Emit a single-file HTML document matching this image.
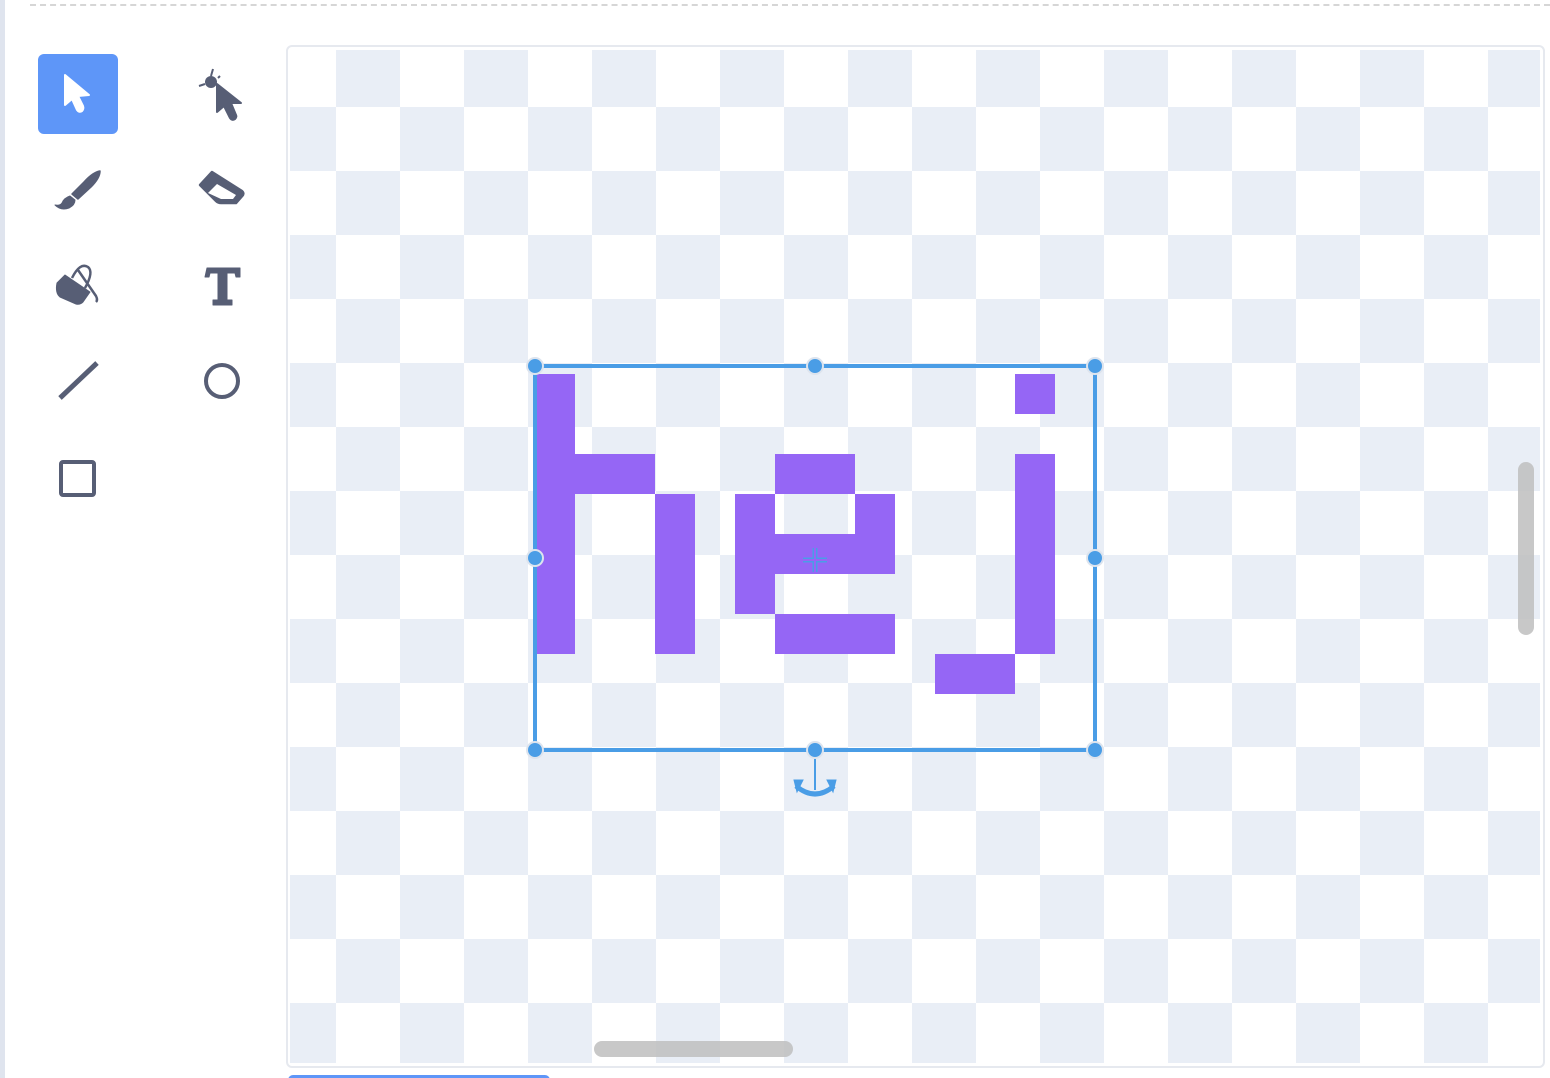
<!DOCTYPE html>
<html><head><meta charset="utf-8"><style>
html,body{margin:0;padding:0;width:1550px;height:1078px;overflow:hidden;background:#fff;position:relative;font-family:"Liberation Sans",sans-serif}
.a{position:absolute}
.p{position:absolute;background:#9566f5}
</style></head><body>
<div class="a" style="left:0;top:0;width:5px;height:1078px;background:#dfe4ee"></div>
<div class="a" style="left:30px;top:4px;width:1520px;height:0;border-top:2px dashed #d6d6d6"></div>

<!-- tools -->
<div class="a" style="left:38px;top:54px;width:80px;height:80px;border-radius:6px;background:#5e96f8"></div>
<svg class="a" style="left:0;top:0" width="280" height="520">
<g fill="#fff"><path d="M65 75 L65 105 L72 99 L77 110 Q79 113 82 111 Q84 109 83 106 L78 96 L89 95 Z" stroke="#fff" stroke-width="2" stroke-linejoin="round"/></g>
<g fill="#575e75" stroke="#575e75" stroke-linejoin="round">
<path d="M217 84 L217 112 L224 106 L230 118 Q232 121 235 119 Q237 117 236 115 L231 103 L241 103 Z" stroke-width="2"/>
<circle cx="211" cy="82" r="6" stroke="none"/>
<path d="M211 76 L213 69 M205 84 L199 86 M218 78 L220 76" stroke-width="2" fill="none"/>
<path d="M100 171 Q93 172 84 182 L72 194 L78 199 L91 187 Q100 178 100 171 Z" stroke-width="1.5"/>
<path d="M70 196 Q64 198 62 203 Q60 206 55 205 Q61 211 69 208 Q75 205 75 200 Z" stroke-width="1"/>
<path d="M212 172 L200 185 L216 201 Q218 203 221 203 L236 203 L243 195 Q244 193 242 191 Z" stroke-width="2.5"/>
<path d="M208 193 L217 184 L236 195 L233 199 L221 199 Z" fill="#fff" stroke="none"/>
<path d="M57 283 L65 275 L90 292 L83 302 Q80 305 76 304 L60 297 Q55 293 57 283 Z" stroke-width="1"/>
<path d="M72 278 Q80 262 88 267 Q94 272 85 288 M78 270 L96 296 Q98 300 96 302" fill="none" stroke-width="2.5"/>
<path d="M207 268 L240 268 L240 277 L236 277 L235 273 L227 273 L227 300 L232 300 L232 305 L213 305 L213 300 L218 300 L218 273 L210 273 L209 277 L205 277 Z" stroke-width="1"/>
<path d="M60 398 L97 363" stroke-width="5" fill="none" stroke-linejoin="miter"/>
<circle cx="222" cy="381" r="16" fill="none" stroke-width="4"/>
<rect x="61" y="462" width="33" height="33" rx="2" fill="none" stroke-width="4"/>
</g></svg>

<!-- canvas -->
<div class="a" style="left:286px;top:45px;width:1255px;height:1019px;border:2px solid #e6e9ef;border-radius:6px"></div>
<div class="a" style="left:290px;top:50px;width:1250px;height:1013px;background-image:conic-gradient(#fff 0 25%,#e9eef6 0 50%,#fff 0 75%,#e9eef6 0);background-size:128px 128px;background-position:46px -7px"></div>

<!-- hej -->
<div class="p" style="left:535px;top:374px;width:40px;height:280px"></div>
<div class="p" style="left:575px;top:454px;width:80px;height:40px"></div>
<div class="p" style="left:655px;top:494px;width:40px;height:160px"></div>
<div class="p" style="left:775px;top:454px;width:80px;height:40px"></div>
<div class="p" style="left:735px;top:494px;width:40px;height:120px"></div>
<div class="p" style="left:855px;top:494px;width:40px;height:40px"></div>
<div class="p" style="left:775px;top:534px;width:120px;height:40px"></div>
<div class="p" style="left:775px;top:614px;width:120px;height:40px"></div>
<div class="p" style="left:1015px;top:374px;width:40px;height:40px"></div>
<div class="p" style="left:1015px;top:454px;width:40px;height:200px"></div>
<div class="p" style="left:935px;top:654px;width:80px;height:40px"></div>

<!-- selection -->
<svg class="a" style="left:0;top:0" width="1550" height="1078">
<g stroke="#4a9de6" fill="#4a9de6">
<rect x="535" y="366" width="560" height="384" fill="none" stroke-width="4"/>
<line x1="815" y1="750" x2="815" y2="790" stroke-width="2"/>
<g stroke="#dde4ee" stroke-width="2">
<circle cx="535" cy="366" r="8"/><circle cx="815" cy="366" r="8"/><circle cx="1095" cy="366" r="8"/>
<circle cx="535" cy="558" r="8"/><circle cx="1095" cy="558" r="8"/>
<circle cx="535" cy="750" r="8"/><circle cx="815" cy="750" r="8"/><circle cx="1095" cy="750" r="8"/>
</g>
<path d="M803 560 L827 560 M815 548 L815 572" stroke-width="5" stroke="#4a9de6"/>
<path d="M803 560 L827 560 M815 548 L815 572" stroke-width="2" stroke="#9566f5"/>
<path d="M796 786 Q815 802 834 786" fill="none" stroke-width="5"/>
<path d="M794 780 L803 780 L797 792 Z M836 780 L827 780 L833 792 Z" stroke-width="1"/>
</g></svg>

<!-- scrollbars -->
<div class="a" style="left:1518px;top:462px;width:16px;height:173px;border-radius:8px;background:rgba(190,190,190,.85)"></div>
<div class="a" style="left:594px;top:1041px;width:199px;height:16px;border-radius:8px;background:rgba(190,190,190,.85)"></div>

<div class="a" style="left:288px;top:1075px;width:262px;height:10px;border-radius:5px;background:#5e96f8"></div>
</body></html>
